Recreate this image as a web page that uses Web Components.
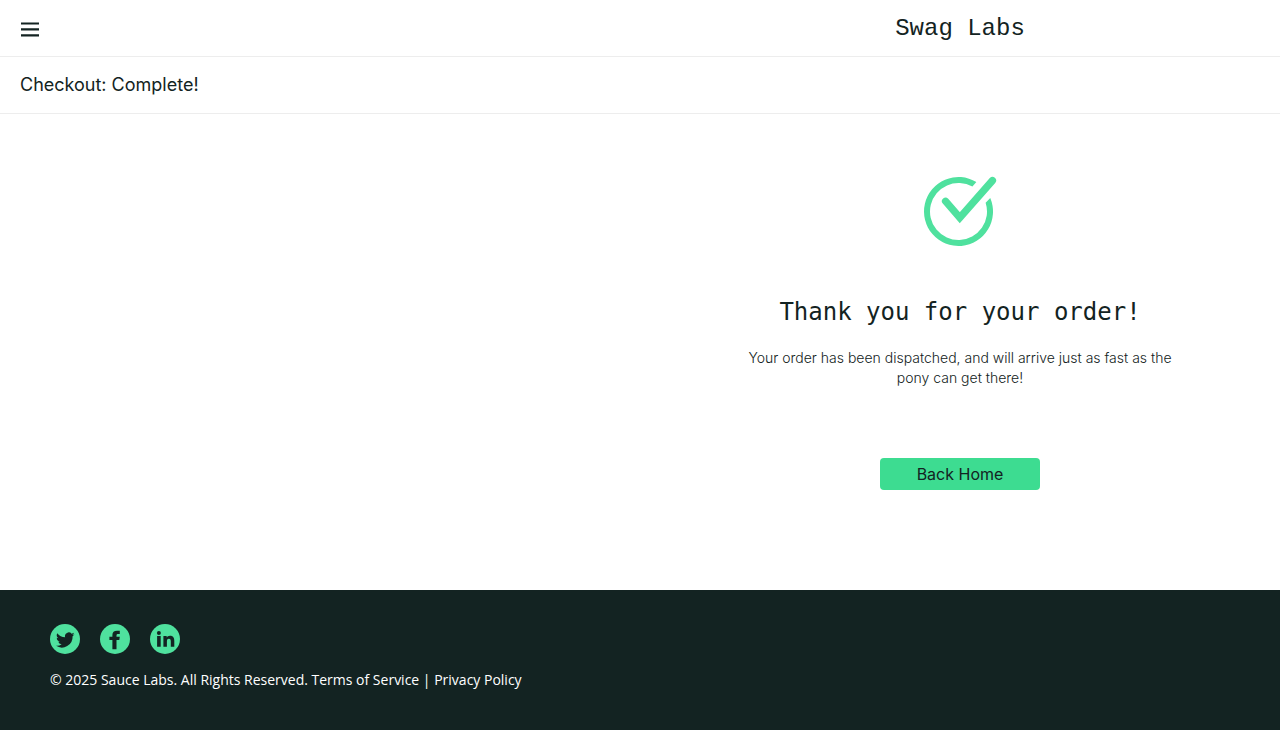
<!DOCTYPE html>
<html lang="en">
<head>
<meta charset="utf-8">
<meta name="viewport" content="width=device-width, initial-scale=1">
<title>Swag Labs</title>
<style>
  :root { --ink: #132322; --line: #ededed; --green: #3ddc91; --mint: #4fe19e; }
  body { margin: 0; background: #fff; color: var(--ink); font-family: Inter, sans-serif; }
</style>
</head>
<body>
<swag-page>
  <swag-header slot="header">Swag Labs</swag-header>
  <swag-title slot="title">Checkout: Complete!</swag-title>
  <order-complete>
    <span slot="heading">Thank you for your order!</span>
    Your order has been dispatched, and will arrive just as fast as the pony can get there!
    <swag-button slot="action">Back Home</swag-button>
  </order-complete>
  <swag-footer slot="footer">
    <social-link slot="social" kind="twitter" href="#twitter"></social-link>
    <social-link slot="social" kind="facebook" href="#facebook"></social-link>
    <social-link slot="social" kind="linkedin" href="#linkedin"></social-link>
    © 2025 Sauce Labs. All Rights Reserved. Terms of Service | Privacy Policy
  </swag-footer>
</swag-page>

<script>
const define = (name, html) => customElements.define(name, class extends HTMLElement {
  constructor() {
    super();
    this.attachShadow({ mode: 'open' }).innerHTML = html;
  }
});

define('swag-page', `
  <style>
    :host { display: flex; flex-direction: column; min-height: 100vh; }
    main { flex: 1; }
  </style>
  <slot name="header"></slot>
  <slot name="title"></slot>
  <main><slot></slot></main>
  <slot name="footer"></slot>`);

define('swag-header', `
  <style>
    :host { display: block; border-bottom: 1px solid var(--line); }
    header { display: grid; grid-template-columns: 1fr 1fr; align-items: center; padding: 13px 0 11px; }
    button { display: block; width: 20px; height: 20px; margin: 0 20px; padding: 0; border: 0; background: none; cursor: pointer; }
    svg { display: block; stroke: var(--ink); }
    .logo { text-align: center; font: 24px/32px "Liberation Mono", monospace; }
  </style>
  <header>
    <button type="button" aria-label="Open Menu">
      <svg width="20" height="20" viewBox="0 0 20 20" fill="none" stroke-width="2.2"><path d="M1 4.5h18M1 10.3h18M1 16.3h18"/></svg>
    </button>
    <div class="logo"><slot></slot></div>
  </header>`);

define('swag-title', `
  <style>
    :host { display: block; padding: 16px 20px; border-bottom: 1px solid var(--line); }
    h1 { margin: 0; font-size: 18px; line-height: 24px; font-weight: 400; }
  </style>
  <h1><slot></slot></h1>`);

define('order-complete', `
  <style>
    :host { display: grid; grid-template-columns: 1fr 1fr; }
    section { grid-column: 2; display: flex; flex-direction: column; align-items: center; padding: 56px 20px 100px; text-align: center; }
    .ring { fill: var(--mint); }
    .tick { fill: none; stroke: var(--mint); stroke-width: 7.2; stroke-linecap: round; }
    h2 { margin: 46px 0 20px; font: 24px/32px "DejaVu Sans Mono", monospace; }
    p { max-width: 450px; margin: 0 0 70px; font-size: 14px; line-height: 20px; font-weight: 300; }
  </style>
  <section>
    <svg width="80" height="80" viewBox="0 0 80 80" role="img" aria-label="Pony Express">
      <path class="ring" d="M56.37 11.99A34.5 34.5 0 1 0 70.26 28.02L65.62 32.72A28.5 28.5 0 1 1 52.41 16.62Z"/>
      <path class="tick" d="M25.5 31.2 39.8 47.7 72.5 10.5"/>
    </svg>
    <h2><slot name="heading"></slot></h2>
    <p><slot></slot></p>
    <slot name="action"></slot>
  </section>`);

define('swag-button', `
  <style>
    :host { display: block; width: 160px; }
    button { display: block; width: 100%; height: 32px; padding: 0; border: 0; border-radius: 4px; background: var(--green); color: var(--ink); font: 16px/24px Inter, sans-serif; cursor: pointer; }
  </style>
  <button type="button"><slot></slot></button>`);

define('swag-footer', `
  <style>
    :host { display: block; background: var(--ink); color: #fff; }
    footer { padding: 34px 50px 40px; }
    nav { display: flex; gap: 20px; margin-bottom: 16px; }
    .copy { font: 14px/20px "Open Sans", sans-serif; }
  </style>
  <footer>
    <nav aria-label="Social"><slot name="social"></slot></nav>
    <div class="copy"><slot></slot></div>
  </footer>`);

const glyphs = {
  twitter: ['Twitter', '<path d="M24.5 10.3a7.4 7.4 0 0 1-2.2.6 3.8 3.8 0 0 0 1.7-2.1 7.6 7.6 0 0 1-2.4.9 3.8 3.8 0 0 0-6.5 3.5A10.7 10.7 0 0 1 7.3 9.2a3.8 3.8 0 0 0 1.2 5 3.8 3.8 0 0 1-1.7-.5 3.8 3.8 0 0 0 3 3.8 3.8 3.8 0 0 1-1.7.1 3.8 3.8 0 0 0 3.5 2.6 7.6 7.6 0 0 1-5.6 1.6 10.8 10.8 0 0 0 16.6-9.6 7.6 7.6 0 0 0 1.9-1.9z"/>'],
  facebook: ['Facebook', '<path d="M12.4 25.3V16.1H9.4v-3.4h3v-1.6C12.4 8.2 14 6.8 17 6.8h2.8v3.3h-1.7c-1.2 0-1.6.5-1.6 1.5v1.1h3.3l-.5 3.4h-2.8v9.2z"/>'],
  linkedin: ['LinkedIn', '<path d="M7.1 12h3.6v10.7H7.1zM13.4 12h3.3v1.5c.6-1 1.7-1.8 3.3-1.8 3.3 0 4.3 2.1 4.3 5.2v5.8h-3.5v-5.2c0-1.4-.3-2.7-1.9-2.7s-2 1.3-2 2.7v5.2h-3.5z"/><circle cx="8.9" cy="8.9" r="2"/>']
};

customElements.define('social-link', class extends HTMLElement {
  constructor() {
    super();
    this.attachShadow({ mode: 'open' });
  }
  connectedCallback() {
    const [label, glyph] = glyphs[this.getAttribute('kind')];
    this.shadowRoot.innerHTML = `
      <style>
        :host { display: block; }
        a, svg { display: block; }
        .disc { fill: var(--mint); }
        g { fill: var(--ink); }
      </style>
      <a href="${this.getAttribute('href')}" aria-label="${label}">
        <svg width="30" height="30" viewBox="0 0 30 30"><circle class="disc" cx="15" cy="15" r="15"/><g>${glyph}</g></svg>
      </a>`;
  }
});
</script>
</body>
</html>
